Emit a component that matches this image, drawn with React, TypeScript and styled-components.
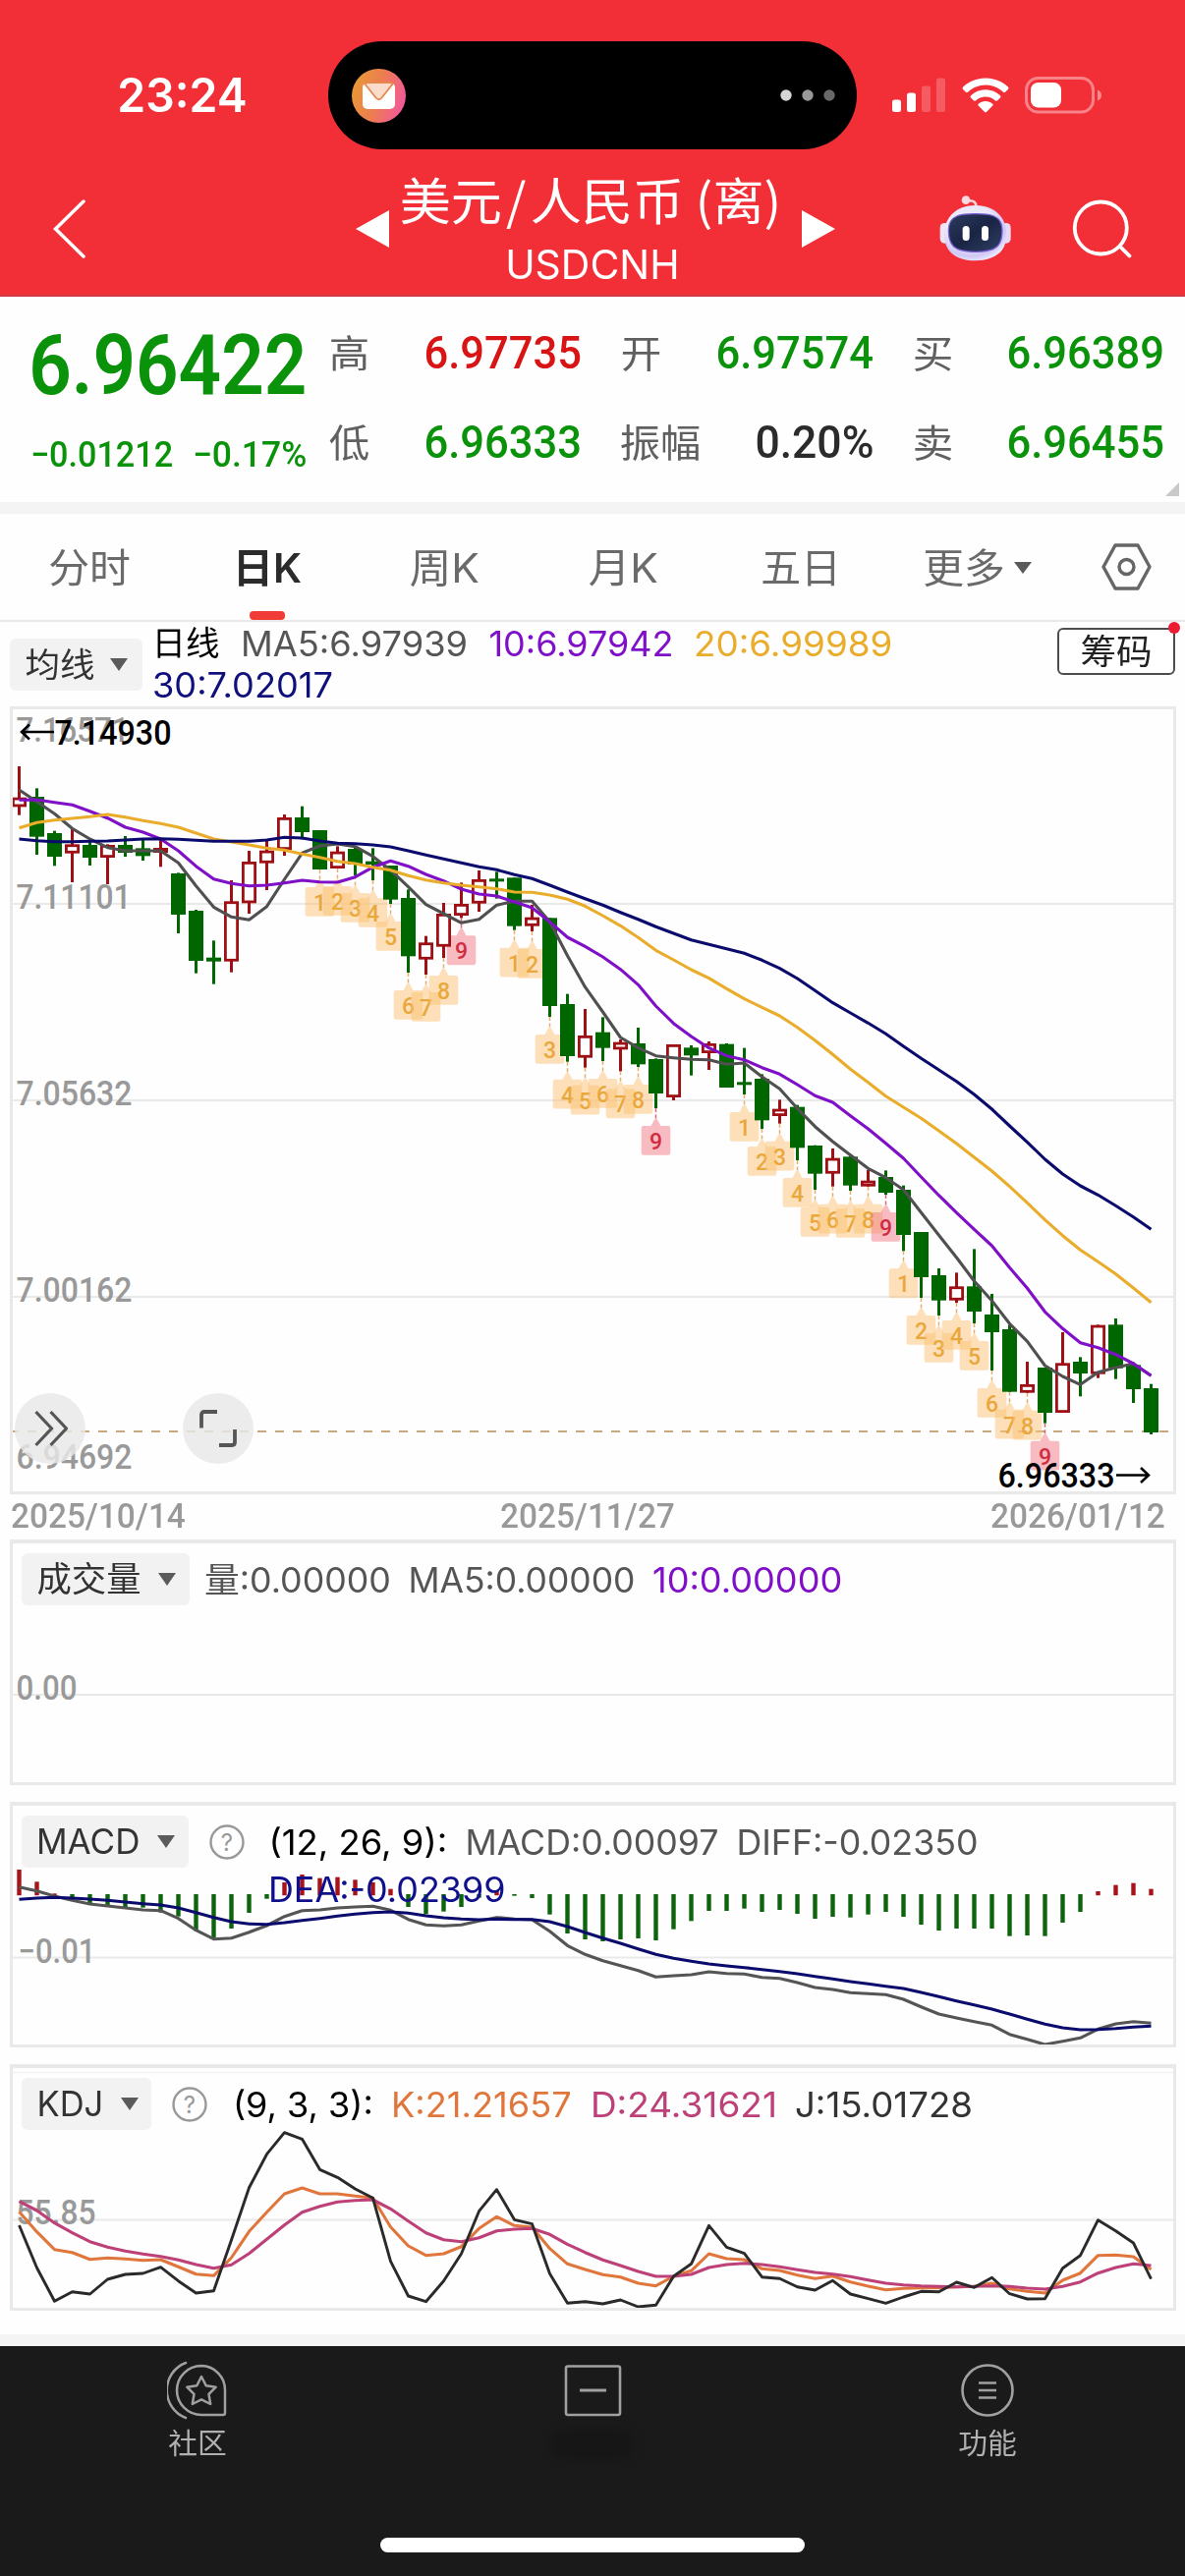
import React, { useLayoutEffect, useRef, useState } from "react";
import styled, { createGlobalStyle } from "styled-components";

const UI = `Inter, "Noto Sans CJK SC", sans-serif`;
const DIN = `Roboto, "Noto Sans CJK SC", sans-serif`;
const HAN = `"Noto Sans CJK SC", Inter, sans-serif`;

const GlobalStyle = createGlobalStyle`
  * { box-sizing: border-box; }
  body { margin: 0; background: #fff; }
  svg { display: block; flex-shrink: 0; }
`;

/* ---------- text that keeps a fixed measure ---------- */

const FitBox = styled.span<{ $w: number; $size: number; $weight: number; $color: string; $font: string; $ml: number; $up: number }>`
  display: flex;
  justify-content: center;
  flex-shrink: 0;
  width: ${(p) => p.$w}px;
  margin-left: ${(p) => p.$ml}px;
  margin-bottom: ${(p) => p.$up}px;
  font-family: ${(p) => p.$font};
  font-size: ${(p) => p.$size}px;
  font-weight: ${(p) => p.$weight};
  color: ${(p) => p.$color};
  line-height: 1;
  white-space: pre;
`;
const FitInner = styled.span`
  flex-shrink: 0;
`;

type FitProps = { w: number; size: number; color: string; children: React.ReactNode; weight?: number; din?: boolean; han?: boolean; ml?: number; up?: number };

function Fit({ w, size, color, children, weight = 400, din, han, ml = 0, up = 0 }: FitProps) {
  const ref = useRef<HTMLSpanElement>(null);
  const [k, setK] = useState(1);
  useLayoutEffect(() => {
    const natural = ref.current ? ref.current.offsetWidth : 0;
    if (natural > 0) setK((w + size * 0.09) / natural);
  }, [w, size]);
  return (
    <FitBox $w={w} $size={size} $weight={weight} $color={color} $font={din ? DIN : han ? HAN : UI} $ml={ml} $up={up}>
      <FitInner ref={ref} style={{ transform: `scaleX(${k})` }}>{children}</FitInner>
    </FitBox>
  );
}

/* ---------- layout parts ---------- */

const Page = styled.div`
  display: flex;
  flex-direction: column;
  width: 1206px;
  height: 2622px;
  overflow: hidden;
  background: #fefefe;
  font-family: ${UI};
  & > * {
    flex-shrink: 0;
  }
`;
const Header = styled.header`
  height: 302px;
  background: #f22f37;
  border-bottom: 2px solid #cf3a44;
`;
const StatusBar = styled.div`
  display: flex;
  align-items: center;
  height: 176px;
  padding: 18px 0 0 121px;
`;
const Island = styled.div`
  display: flex;
  align-items: center;
  justify-content: space-between;
  width: 538px;
  height: 110px;
  margin: 0 36px 0 85px;
  padding: 0 22px 0 24px;
  border-radius: 55px;
  background: #000;
`;
const StatusIcons = styled.div`
  display: flex;
  align-items: center;
  gap: 16px;
`;
const NavBar = styled.div`
  display: flex;
  align-items: center;
  height: 126px;
  padding-left: 52px;
`;
const NavIcon = styled.span<{ $ml?: number; $up?: number }>`
  display: flex;
  margin-left: ${(p) => p.$ml ?? 0}px;
  margin-bottom: ${(p) => p.$up ?? 12}px;
`;
const Title = styled.div`
  display: flex;
  flex-direction: column;
  align-items: center;
  width: 384px;
  margin: 0 22px 0 13px;
`;
const TitleLine = styled.div<{ $h: number }>`
  display: flex;
  align-items: center;
  height: ${(p) => p.$h}px;
`;
const Slash = styled.span`
  margin: 0 4px;
`;

const Quote = styled.section`
  position: relative;
  display: flex;
  height: 209px;
  padding: 12px 0 0 33px;
`;
const PriceCol = styled.div`
  display: flex;
  flex-direction: column;
  flex-shrink: 0;
  width: 278px;
  margin-right: 25px;
  padding-top: 1px;
`;
const PriceLine = styled.div<{ $h: number }>`
  display: flex;
  align-items: center;
  height: ${(p) => p.$h}px;
`;
const QuoteCol = styled.div<{ $w: number }>`
  flex-shrink: 0;
  width: ${(p) => p.$w}px;
  margin-right: 43px;
`;
const QuoteRow = styled.div`
  display: flex;
  align-items: center;
  justify-content: space-between;
  height: 91px;
`;
const Corner = styled.i`
  position: absolute;
  right: 6px;
  bottom: 6px;
  border-left: 14px solid transparent;
  border-bottom: 14px solid #c9c9c9;
`;
const Band = styled.div`
  height: 12px;
  background: #f4f4f4;
`;

const Tabs = styled.nav`
  display: flex;
  height: 110px;
  border-bottom: 2px solid #e8e8e8;
`;
const Tab = styled.div<{ $active?: boolean }>`
  position: relative;
  display: flex;
  align-items: center;
  justify-content: center;
  width: 181px;
  padding-top: 3px;
  &::after {
    content: "";
    display: ${(p) => (p.$active ? "block" : "none")};
    position: absolute;
    left: 73px;
    bottom: 0;
    width: 36px;
    height: 9px;
    border-radius: 4px;
    background: #f03b36;
  }
`;
const MoreTab = styled.div`
  display: flex;
  align-items: center;
  gap: 11px;
  width: 216px;
  padding: 2px 0 0 36px;
`;
const TabIcon = styled.div`
  display: flex;
  align-items: center;
`;

const Triangle = styled.i<{ $w?: number; $h?: number }>`
  border: ${(p) => (p.$w ?? 17) / 2}px solid transparent;
  border-bottom: 0;
  border-top: ${(p) => p.$h ?? 13}px solid #5b5b5b;
`;

const MaBar = styled.div`
  display: flex;
  align-items: flex-start;
  height: 86px;
  padding-left: 10px;
`;
const Picker = styled.button<{ $w: number; $mt?: number; $gap?: number }>`
  display: flex;
  align-items: center;
  gap: ${(p) => p.$gap ?? 19}px;
  flex-shrink: 0;
  width: ${(p) => p.$w}px;
  height: 53px;
  margin: ${(p) => p.$mt ?? 0}px 0 0;
  padding: 0 0 0 17px;
  border: 0;
  border-radius: 6px;
  background: #f2f2f2;
`;
const Legend = styled.div<{ $row: number; $w: number; $mt: number; $ml: number }>`
  display: flex;
  flex-wrap: wrap;
  column-gap: 21px;
  width: ${(p) => p.$w}px;
  margin: ${(p) => p.$mt}px 0 0 ${(p) => p.$ml}px;
  & > span {
    height: ${(p) => p.$row}px;
    line-height: ${(p) => p.$row}px;
  }
`;
const ChipButton = styled.button`
  position: relative;
  display: flex;
  align-items: center;
  justify-content: center;
  width: 120px;
  height: 48px;
  margin: 6px 0 0 20px;
  padding: 0;
  border: 2px solid #4d4d4d;
  border-radius: 6px;
  background: #fff;
  &::after {
    content: "";
    position: absolute;
    top: -8px;
    right: -7px;
    width: 12px;
    height: 12px;
    border-radius: 50%;
    background: #ee1c33;
  }
`;

const Panel = styled.section<{ $h: number; $top?: number; $mb?: number }>`
  position: relative;
  width: 1187px;
  height: ${(p) => p.$h}px;
  margin: 0 0 ${(p) => p.$mb ?? 0}px 10px;
  border: 3px solid #e9e9e9;
  border-top-width: ${(p) => p.$top ?? 4}px;
`;
const ChartLayer = styled.svg`
  position: absolute;
  left: 0;
  top: 0;
  font-family: ${DIN};
`;
const PanelHead = styled.div`
  position: relative;
  display: flex;
  align-items: flex-start;
  padding: 10px 0 0 9px;
`;
const HelpSlot = styled.span`
  display: flex;
  align-items: center;
  height: 53px;
  margin-left: 21px;
`;
const RoundButton = styled.button<{ $left: number }>`
  position: absolute;
  left: ${(p) => p.$left}px;
  top: 696px;
  display: flex;
  align-items: center;
  justify-content: center;
  width: 72px;
  height: 72px;
  padding: 0;
  border: 0;
  border-radius: 50%;
  background: rgba(232, 232, 232, 0.82);
`;
const Dates = styled.div`
  display: flex;
  align-items: center;
  justify-content: space-between;
  height: 46px;
  padding: 0 22px 2px 12px;
`;

const Footer = styled.footer`
  display: flex;
  flex-direction: column;
  align-items: center;
  height: 234px;
  background: #1a1a1a;
`;
const FooterTabs = styled.div`
  display: flex;
  width: 100%;
  height: 195px;
`;
const FooterTab = styled.div`
  display: flex;
  flex: 1;
  flex-direction: column;
  align-items: center;
  gap: 9px;
  padding-top: 14px;
`;
const Smudge = styled.i`
  width: 84px;
  height: 30px;
  border-radius: 14px;
  background: #161616;
  filter: blur(5px);
`;
const HomeBar = styled.div`
  width: 432px;
  height: 15px;
  border-radius: 8px;
  background: #fff;
`;

/* ---------- icons ---------- */

const MailIcon = () => (
  <svg width="55" height="55" viewBox="0 0 55 55">
    <defs>
      <linearGradient id="mail" x1="0" y1="0.3" x2="1" y2="0.6">
        <stop offset="0" stopColor="#e79a34" />
        <stop offset="0.5" stopColor="#ee7c52" />
        <stop offset="1" stopColor="#f2589a" />
      </linearGradient>
    </defs>
    <circle cx="27.5" cy="27.5" r="27.5" fill="url(#mail)" />
    <rect x="11" y="14" width="33" height="27" rx="5" fill="#fff" />
    <path d="M13 15 L24.5 29.5 Q27.5 33 30.5 29.5 L42 15 Q40 14 38 14 L17 14 Q15 14 13 15Z" fill="#fbdccb" stroke="#e8864f" strokeWidth="1.8" />
  </svg>
);
const DotsIcon = () => (
  <svg width="57" height="12" viewBox="0 0 57 12">
    <circle cx="7" cy="6" r="5.7" fill="#d6d6d6" />
    <circle cx="29" cy="6" r="5.7" fill="#989898" />
    <circle cx="51" cy="6" r="5.7" fill="#686868" />
  </svg>
);
const SignalIcon = () => (
  <svg width="55" height="36" viewBox="0 0 55 36" fill="#fff">
    <rect x="0" y="22.5" width="9" height="12.5" rx="2.5" />
    <rect x="15" y="15.5" width="9" height="19.5" rx="2.5" />
    <rect x="30" y="8.5" width="9" height="26.5" rx="2.5" opacity="0.22" />
    <rect x="45" y="0.5" width="9" height="34.5" rx="2.5" opacity="0.22" />
  </svg>
);
const WifiIcon = () => (
  <svg width="48" height="36" viewBox="0 0 48 36" fill="#fff">
    <path d="M24 0.5C33 .5 41 4 46.9 9.6c.7.7.7 1.6 0 2.300l-2.600 2.700c-.6.700-1.600.700-2.300.1C37.300 10.400 31 7.500 24 7.500S10.700 10.400 6 14.700c-.7.600-1.700.600-2.300-.1L1.100 11.900c-.7-.7-.7-1.600 0-2.300C7 4 15 .5 24 .5Z" />
    <path d="M24 12.300c5.800 0 11 2.200 14.900 5.900.7.700.7 1.600.1 2.300l-2.800 2.800c-.6.600-1.500.600-2.200.1C31.300 20.900 27.800 19.400 24 19.400s-7.300 1.500-10 4c-.7.500-1.600.500-2.200-.1L9 20.500c-.6-.7-.6-1.600.1-2.300C13 14.500 18.200 12.300 24 12.300Z" />
    <path d="M24 24c2.700 0 5.100.9 7 2.500.8.700.8 1.500.1 2.200l-5.900 6c-.7.700-1.700.700-2.400 0l-5.900-6c-.7-.7-.7-1.500.1-2.200 1.900-1.600 4.300-2.500 7-2.500Z" />
  </svg>
);
const BatteryIcon = () => (
  <svg width="79" height="38" viewBox="0 0 79 38">
    <rect x="1.500" y="1.500" width="68" height="34.500" rx="12" fill="none" stroke="#fff" strokeOpacity="0.4" strokeWidth="3" />
    <rect x="6" y="6" width="31" height="25.500" rx="7.500" fill="#fff" />
    <path d="M74 13.500 Q78 15 78 19 T74 24.500Z" fill="#fff" opacity="0.45" />
  </svg>
);
const BackIcon = () => (
  <svg width="38" height="64" viewBox="0 0 38 64" fill="none" stroke="#fff" strokeWidth="3.500" strokeLinecap="round">
    <path d="M33 4 L4.500 32 L33 60" />
  </svg>
);
const ArrowHead = ({ flip }: { flip?: boolean }) => (
  <svg width="34" height="38" viewBox="0 0 34 38" fill="#fff">
    <path d={flip ? "M0 0 L34 19 L0 38Z" : "M34 0 L0 19 L34 38Z"} />
  </svg>
);
const RobotIcon = () => (
  <svg width="76" height="72" viewBox="196 410 228 216">
    <defs>
      <radialGradient id="head" cx="0.42" cy="0.36" r="0.68">
        <stop offset="0.55" stopColor="#eceafa" />
        <stop offset="0.82" stopColor="#cfc8f6" />
        <stop offset="1" stopColor="#f0ecfc" />
      </radialGradient>
      <linearGradient id="visor" x1="0" y1="0" x2="1" y2="1">
        <stop offset="0" stopColor="#2c3a5c" />
        <stop offset="0.5" stopColor="#1a2545" />
        <stop offset="1" stopColor="#2e4064" />
      </linearGradient>
    </defs>
    <path d="M288 432 Q312 430 311 450" fill="none" stroke="#fbd5dc" strokeWidth="8" />
    <circle cx="280" cy="430" r="13" fill="#fbd9e0" />
    <rect x="201" y="500" width="28" height="62" rx="14" fill="#f0e4f6" />
    <rect x="389" y="500" width="28" height="62" rx="14" fill="#ead9f6" />
    <path d="M309 446 C365 446 404 480 404 535 C404 590 365 615 309 615 C253 615 214 590 214 535 C214 480 253 446 309 446Z" fill="url(#head)" />
    <path d="M309 472 C350 472 391 474 391 522 C391 565 378 588 309 588 C240 588 227 565 227 522 C227 474 268 472 309 472Z" fill="url(#visor)" stroke="#7a5fd6" strokeWidth="4" />
    <rect x="270" y="509" width="21" height="45" rx="10.500" fill="#fff" />
    <rect x="328" y="509" width="21" height="45" rx="10.500" fill="#fff" />
  </svg>
);
const SearchIcon = () => (
  <svg width="64" height="62" viewBox="0 0 64 62" fill="none" stroke="#fff" strokeWidth="3.800" strokeLinecap="round">
    <circle cx="30.300" cy="30" r="26.500" />
    <path d="M50 49 L59.500 58.500" />
  </svg>
);
const HexIcon = () => (
  <svg width="52" height="48" viewBox="0 0 52 48" fill="none" stroke="#666" strokeWidth="3.400" strokeLinejoin="round">
    <path d="M14 2 L37 2 L49 24 L37 46 L14 46 L2 24Z" />
    <circle cx="25.500" cy="24" r="7.500" />
  </svg>
);
const HelpIcon = () => (
  <svg width="36" height="36" viewBox="0 0 36 36">
    <circle cx="18" cy="18" r="16.500" fill="none" stroke="#999" strokeWidth="2.400" />
    <text x="18" y="26.500" textAnchor="middle" fontFamily="Inter" fontSize="24" fill="#999">?</text>
  </svg>
);
const ForwardIcon = () => (
  <svg width="36" height="38" viewBox="-1.500 0 36 38" fill="none" stroke="#555" strokeWidth="3.200">
    <path d="M2 2 L18 19 L2 36 M17 2 L33 19 L17 36" />
  </svg>
);
const ExpandIcon = () => (
  <svg width="38" height="38" viewBox="0 0 38 38" fill="none" stroke="#555" strokeWidth="3.800">
    <path d="M2 18.500 V5 Q2 2 5 2 H18 M36 20 V33 Q36 36 33 36 H20" />
  </svg>
);
const CommunityIcon = () => (
  <svg width="62" height="62" viewBox="0 0 62 62" fill="none" stroke="#a0a0a0" strokeWidth="2.500" strokeLinecap="round" strokeLinejoin="round">
    <path d="M19 3 A30 30 0 0 0 19 59" />
    <path d="M35 6 A24.500 24.500 0 0 0 35 56 H57 Q59 56 59 54 V31 A24.500 24.500 0 0 0 35 6Z" />
    <path d="M35 17 L39.700 26.200 L49.700 27.700 L42.500 34.900 L44.200 45 L35 40.300 L25.800 45 L27.500 34.900 L20.300 27.700 L30.300 26.200Z" />
  </svg>
);
const TradeIcon = () => (
  <svg width="62" height="62" viewBox="0 0 62 62" fill="none" stroke="#a0a0a0" strokeWidth="2.600">
    <rect x="4" y="6.500" width="55" height="49.500" rx="2" />
    <path d="M18 31 H45" strokeWidth="3" />
  </svg>
);
const MenuIcon = () => (
  <svg width="62" height="62" viewBox="0 0 62 62" fill="none" stroke="#a0a0a0" strokeWidth="2.600">
    <circle cx="31" cy="31" r="25.500" />
    <path d="M22 23.500 H40 M22 31 H40 M22 38.500 H40" />
  </svg>
);

/* ---------- chart data: one entry per trading day ---------- */

const STEP = 18;
const X0 = 19.5;
const dayX = (i: number) => X0 + i * STEP;

type Segment = { base: number; rows: string };
const third = (base: number, v: number) => base + v / 3;

const CANDLES: Segment[] = [
  {
    base: 720,
    rows:
      "r180,275,304,329 g247,273,395,450 g377,384,456,484 r370,418,446,534 g405,420,459,483 r418,420,459,540 g393,420,444,456 g405,430,454,468 r405,429,444,487 g505,507,633,690 g618,621,774,812 g712,764,776,845 r528,592,776,809 r438,471,598,630 r408,437,476,558 r327,336,435,453 g302,336,381,403 g375,375,495,495 r424,440,492,492 g429,432,480,513 g430,470,480,528 g483,483,587,600",
  },
  {
    base: 800,
    rows:
      "g316,342,520,570 r458,478,530,576 r357,390,491,525 r295,360,396,403 r258,285,359,384 g262,283,292,344 g280,280,428,440 r363,401,428,444 g403,403,672,705 g635,666,825,842 r681,762,830,860 g706,752,800,840 r774,782,805,871 g738,786,850,858 g832,834,939,984 r789,789,951,960 g792,799,823,884 r780,786,816,867 g786,788,921,921 g800,904,913,942 g880,894,1021,1047 r958,986,1008,1031 g974,980,1105,1143",
  },
  {
    base: 1020,
    rows:
      "g437,438,524,573 r447,476,524,563 g470,472,560,576 r513,545,563,563 g514,534,582,588 g560,573,711,760 g702,702,840,903 g813,834,911,957 r826,868,911,918 g754,868,945,981 g891,954,1008,1125 g985,999,1190,1190 r1098,1167,1193,1193 g1116,1116,1254,1286 r1008,1102,1254,1254 g1084,1098,1134,1204 r985,986,1136,1148 g966,985,1118,1151 g1100,1108,1182,1224 g1166,1179,1314,1320",
  },
];
const candles = CANDLES.flatMap((s) =>
  s.rows.split(" ").map((r) => ({
    up: r[0] === "r",
    v: r.slice(1).split(",").map((n) => third(s.base, Number(n))),
  }))
);

const series = (...parts: [number, number[]][]) => parts.flatMap(([base, vs]) => vs.map((v) => third(base, v)));
const toPoints = (ys: number[]) => ys.map((y, i) => `${dayX(i)},${y.toFixed(1)}`).join(" ");

const MA5 = series(
  [720, [252, 288, 325, 370, 402, 428, 438, 438, 438, 475, 545, 610, 640, 649, 608, 525, 445, 423, 417, 425, 455, 497]],
  [800, [308, 362, 390, 418, 407, 364, 352, 352, 415, 518, 614, 690, 768, 800, 824, 830, 835, 836, 850, 846, 888, 925, 985]],
  [1020, [380, 426, 467, 508, 536, 573, 643, 712, 780, 852, 912, 982, 1036, 1110, 1143, 1168, 1130, 1116, 1104, 1141]]
);
const MA10 = series(
  [720, [283, 282, 290, 298, 317, 338, 366, 381, 402, 438, 485, 524, 538, 545, 543, 536, 528, 533, 534, 518, 488, 469]],
  [800, [245, 270, 290, 315, 330, 336, 354, 372, 415, 462, 490, 522, 560, 607, 672, 725, 765, 800, 824, 836, 860, 880, 912]],
  [1020, [286, 306, 347, 387, 431, 477, 534, 590, 643, 694, 744, 811, 874, 946, 997, 1040, 1055, 1076, 1104, 1141]]
);
const MA20 = series(
  [720, [368, 352, 344, 339, 334, 327, 335, 346, 355, 366, 384, 402, 411, 420, 430, 436, 448, 458, 470, 477, 488, 497]],
  [800, [274, 287, 296, 303, 308, 314, 324, 325, 333, 346, 367, 396, 427, 463, 502, 531, 561, 587, 619, 650, 676, 702, 737]],
  [1020, [117, 160, 205, 245, 287, 321, 355, 393, 432, 474, 516, 563, 613, 665, 713, 757, 793, 830, 873, 917]]
);
const MA30 = series(
  [720, [402, 407, 410, 410, 409, 408, 405, 402, 401, 403, 406, 409, 409, 409, 405, 397, 399, 408, 415, 416, 420, 426]],
  [800, [198, 211, 223, 235, 247, 256, 271, 283, 303, 324, 344, 364, 386, 407, 430, 450, 470, 484, 497, 511, 532, 557, 588]],
  [1020, [-35, 2, 33, 64, 97, 135, 172, 207, 242, 282, 327, 378, 428, 480, 525, 561, 589, 622, 656, 694]]
);

const COUNTS: [number, number][] = [[17, 9], [28, 9], [41, 9], [50, 9]];
const markers = COUNTS.flatMap(([start, n]) =>
  Array.from({ length: n }, (_, k) => ({ n: k + 1, x: dayX(start + k), low: candles[start + k].v[3] }))
);

const BARS = [
  249, 286, 322, 335, 355, 360, 365, 365, 380, 392, 436, 458, 429, 381, 338, 288, 264, 275, 272, 280, 288, 308, 363, 385, 377,
  363, 335, 314, 329, 336, 386, 444, 462, 468, 462, 459, 465, 431, 406, 375, 375, 368, 378, 372, 384, 399, 393, 395, 386, 378,
  393, 417, 435, 429, 429, 429, 452, 450, 452, 411, 378, 315, 296, 290, 308,
];
const DIFF = series([1820, [
  302, 314, 330, 343, 354, 360, 366, 372, 374, 398, 434, 461, 458, 440, 420, 392, 374, 372, 366, 363, 361, 373, 401, 418, 421,
  418, 406, 395, 400, 402, 437, 481, 508, 527, 542, 557, 577, 573, 570, 561, 566, 568, 578, 581, 594, 609, 615, 625, 628, 631,
  645, 668, 690, 702, 713, 724, 752, 767, 783, 773, 763, 736, 720, 713, 718,
]]);
const DEA = series([1820, [
  340, 336, 334, 336, 339, 343, 348, 353, 357, 366, 380, 395, 408, 415, 416, 411, 404, 398, 391, 385, 380, 378, 382, 390, 396,
  400, 402, 400, 401, 401, 408, 423, 441, 458, 474, 491, 508, 520, 529, 537, 543, 548, 554, 560, 567, 575, 583, 591, 598, 605,
  612, 624, 637, 650, 662, 675, 690, 706, 721, 732, 738, 737, 734, 730, 727,
]]);
const KJ_J = series([2090, [
  525, 655, 757, 728, 735, 690, 675, 672, 653, 695, 732, 725, 570, 410, 308, 242, 262, 355, 379, 414, 442, 635, 741, 758, 695,
  612, 482, 416, 508, 521, 673, 763, 758, 765, 753, 774, 769, 681, 643, 526, 592, 611, 683, 688, 713, 723, 694, 735, 749, 763,
  744, 727, 728, 699, 715, 685, 734, 750, 749, 656, 617, 509, 542, 579, 689,
]]);
const KJ_K = series([2090, [
  484, 545, 599, 608, 629, 625, 628, 632, 630, 652, 674, 679, 624, 544, 485, 429, 411, 429, 429, 436, 442, 530, 588, 617, 612,
  590, 535, 499, 526, 531, 596, 643, 660, 676, 683, 702, 710, 681, 664, 612, 627, 630, 658, 663, 677, 688, 680, 698, 711, 722,
  718, 716, 716, 713, 712, 702, 719, 727, 732, 693, 671, 617, 616, 621, 660,
]]);
const KJ_D = series([2090, [
  452, 480, 518, 548, 575, 592, 604, 613, 620, 631, 645, 656, 646, 611, 568, 524, 485, 467, 454, 449, 447, 475, 512, 548, 569,
  575, 563, 542, 537, 535, 553, 583, 608, 631, 648, 666, 681, 681, 675, 654, 645, 641, 645, 652, 661, 669, 674, 682, 692, 702,
  707, 710, 712, 713, 712, 710, 712, 717, 720, 712, 698, 671, 654, 643, 648,
]]);

/* ---------- chart pieces ---------- */

const Line = ({ ys, color, w = 3.1 }: { ys: number[]; color: string; w?: number }) => (
  <polyline points={toPoints(ys)} fill="none" stroke={color} strokeWidth={w} strokeLinejoin="round" />
);
const AxisLabel = ({ x, y, w, color = "#999", children }: { x: number; y: number; w: number; color?: string; children: string }) => (
  <text x={x - 1.5} y={y} fontSize="34.500" fontWeight="500" fill={color} textLength={w + 3} lengthAdjust="spacingAndGlyphs">{children}</text>
);
const GridLine = ({ y }: { y: number }) => <path d={`M13 ${y} H1194`} stroke="#e9e9e9" strokeWidth="2" />;

const Candle = ({ i }: { i: number }) => {
  const { up, v } = candles[i];
  const [hi, top, bot, lo] = v;
  const x = dayX(i);
  if (!up)
    return (
      <g fill="#006600">
        <rect x={x - 1.5} y={hi} width="3" height={lo - hi} />
        <rect x={x - 7.5} y={top} width="15" height={bot - top} />
      </g>
    );
  return (
    <g>
      <rect x={x - 1.5} y={hi} width="3" height={lo - hi} fill="#9e1014" />
      <rect x={x - 6.1} y={top + 1.4} width="12.200" height={Math.max(bot - top - 2.8, 1)} fill="#fff" stroke="#9e1014" strokeWidth="2.800" />
    </g>
  );
};

const Marker = ({ n, x, low }: { n: number; x: number; low: number }) => {
  const last = n === 9;
  const t = low + 18;
  return (
    <g>
      <path d={`M${x} ${low} V${low + 11}`} stroke={last ? "#d96a74" : "#e3b070"} strokeWidth="1.500" strokeDasharray="4 2.500" />
      <path
        d={`M${x - 5} ${t} L${x - 1.5} ${t - 6.5} Q${x} ${t - 8} ${x + 1.5} ${t - 6.5} L${x + 5} ${t} H${x + 12.500} Q${x + 14.800} ${t} ${x + 14.800} ${t + 2.300} V${t + 27.500} Q${x + 14.800} ${t + 29.800} ${x + 12.500} ${t + 29.800} H${x - 12.500} Q${x - 14.800} ${t + 29.800} ${x - 14.800} ${t + 27.500} V${t + 2.300} Q${x - 14.800} ${t} ${x - 12.500} ${t}Z`}
        fill={last ? "#f06a78" : "#fbc274"}
        opacity={last ? 0.45 : 0.5}
      />
      <text x={x} y={t + 24} textAnchor="middle" fontSize="23" fontWeight="500" fill={last ? "#d02c42" : "#eaa73c"}>{n}</text>
    </g>
  );
};

function KLineChart() {
  return (
    <ChartLayer width="1181" height="796" viewBox="13 722 1181 796">
      {[920, 1120, 1320].map((y) => <GridLine key={y} y={y} />)}
      <AxisLabel x={18} y={754.500} w={112}>7.16571</AxisLabel>
      <AxisLabel x={18} y={924.500} w={114}>7.11101</AxisLabel>
      <AxisLabel x={18} y={1124.500} w={115}>7.05632</AxisLabel>
      <AxisLabel x={18} y={1324.500} w={115}>7.00162</AxisLabel>
      <AxisLabel x={18} y={1494.500} w={115}>6.94692</AxisLabel>
      <path d="M10 1457 H1190" stroke="#c8a97c" strokeWidth="2" strokeDasharray="9 9" />
      {markers.map((m) => <Marker key={m.x} {...m} />)}
      {candles.map((_, i) => <Candle key={i} i={i} />)}
      <Line ys={MA5} color="#505050" />
      <Line ys={MA10} color="#7f10c8" />
      <Line ys={MA20} color="#e9ad2b" />
      <Line ys={MA30} color="#0b0b6e" />
      <g fill="none" stroke="#000" strokeWidth="2.500">
        <path d="M55 745 H22 M30 737.500 L22 745 L30 752.500" />
        <path d="M1136 1501.500 H1169 M1161 1494 L1169 1501.500 L1161 1509" />
      </g>
      <AxisLabel x={57} y={758} w={116} color="#000">7.14930</AxisLabel>
      <AxisLabel x={1017} y={1513.500} w={116} color="#000">6.96333</AxisLabel>
    </ChartLayer>
  );
}

function MacdChart() {
  return (
    <ChartLayer width="1181" height="243" viewBox="13 1838 1181 243">
      <GridLine y={1992.500} />
      <AxisLabel x={20} y={1997.500} w={76}>−0.01</AxisLabel>
      {BARS.map((b, i) => {
        const red = b < 325;
        const end = third(1820, b);
        return (
          <rect key={i} x={dayX(i) - 2.2} y={red ? end : 1928} width="4.400" height={red ? 1929.200 - end : end - 1928} fill={red ? "#a81218" : "#0c640c"} />
        );
      })}
      <Line ys={DIFF} color="#555" />
      <Line ys={DEA} color="#0b0b6e" />
    </ChartLayer>
  );
}

function KdjChart() {
  return (
    <ChartLayer width="1181" height="244" viewBox="13 2105 1181 244">
      <path d="M13 2109.500 H1194" stroke="#f3f3f3" strokeWidth="1.500" />
      <GridLine y={2259.500} />
      <AxisLabel x={18} y={2263.500} w={78}>55.85</AxisLabel>
      <Line ys={KJ_K} color="#e0763c" />
      <Line ys={KJ_D} color="#bd4178" />
      <Line ys={KJ_J} color="#2a2a2a" w={2.9} />
    </ChartLayer>
  );
}

const RED = "#d81414";
const GREEN = "#0b920b";
const QUOTES = [
  { w: 254, rows: [["高", 38, "6.97735", 156, RED], ["低", 38, "6.96333", 156, GREEN]] },
  { w: 254, rows: [["开", 38, "6.97574", 156, GREEN], ["振幅", 79, "0.20%", 117, "#2b2b2b"]] },
  { w: 253, rows: [["买", 38, "6.96389", 156, GREEN], ["卖", 38, "6.96455", 156, GREEN]] },
] as { w: number; rows: [string, number, string, number, string][] }[];

export default function App() {
  return (
    <Page>
      <GlobalStyle />
      <Header>
        <StatusBar>
          <Fit w={128} size={48} weight={600} color="#fff">23:24</Fit>
          <Island>
            <MailIcon />
            <DotsIcon />
          </Island>
          <StatusIcons>
            <SignalIcon />
            <WifiIcon />
            <BatteryIcon />
          </StatusIcons>
        </StatusBar>
        <NavBar>
          <NavIcon><BackIcon /></NavIcon>
          <NavIcon $ml={272}><ArrowHead /></NavIcon>
          <Title>
            <TitleLine $h={60}>
              <Fit han w={384} size={51} color="#fff" up={12}>美元<Slash>/</Slash>人民币 (离)</Fit>
            </TitleLine>
            <TitleLine $h={62}>
              <Fit w={174} ml={4} size={41} color="#fff">USDCNH</Fit>
            </TitleLine>
          </Title>
          <NavIcon $ml={1}><ArrowHead flip /></NavIcon>
          <NavIcon $ml={105}><RobotIcon /></NavIcon>
          <NavIcon $ml={59}><SearchIcon /></NavIcon>
        </NavBar>
      </Header>

      <Quote>
        <PriceCol>
          <PriceLine $h={114}>
            <Fit din w={276} size={85} weight={600} color={GREEN}>6.96422</Fit>
          </PriceLine>
          <PriceLine $h={68}>
            <Fit din w={142} size={36} weight={500} color={GREEN}>−0.01212</Fit>
            <Fit din w={113} ml={23} size={36} weight={500} color={GREEN}>−0.17%</Fit>
          </PriceLine>
        </PriceCol>
        {QUOTES.map((col, i) => (
          <QuoteCol key={i} $w={col.w}>
            {col.rows.map(([label, lw, value, vw, color]) => (
              <QuoteRow key={label}>
                <Fit w={lw} size={39} color="#606060">{label}</Fit>
                <Fit din w={vw} size={47} weight={500} color={color} up={3}>{value}</Fit>
              </QuoteRow>
            ))}
          </QuoteCol>
        ))}
        <Corner />
      </Quote>
      <Band />

      <Tabs>
        <Tab><Fit w={80} size={41} color="#6a6a6a">分时</Fit></Tab>
        <Tab $active><Fit w={67} size={41} weight={600} color="#2b2b2b">日K</Fit></Tab>
        <Tab><Fit w={68} size={41} color="#6a6a6a">周K</Fit></Tab>
        <Tab><Fit w={68} ml={2} size={41} color="#6a6a6a">月K</Fit></Tab>
        <Tab><Fit w={78} size={41} color="#6a6a6a">五日</Fit></Tab>
        <MoreTab>
          <Fit w={80} size={41} color="#6a6a6a">更多</Fit>
          <Triangle $w={18} $h={12} />
        </MoreTab>
        <TabIcon><HexIcon /></TabIcon>
      </Tabs>

      <MaBar>
        <Picker $w={135} $mt={17} $gap={17}>
          <Fit w={68} size={34} color="#333">均线</Fit>
          <Triangle $w={18} />
        </Picker>
        <Legend $row={42} $w={900} $mt={1} $ml={11}>
          <Fit w={66} size={34} color="#000">日线</Fit>
          <Fit w={228} ml={4} size={35} color="#555">MA5:6.97939</Fit>
          <Fit w={185} ml={3} size={35} color="#7f10c8">10:6.97942</Fit>
          <Fit w={199} ml={3} size={35} color="#e9ad2b">20:6.99989</Fit>
          <Fit w={181} size={35} color="#10107c">30:7.02017</Fit>
        </Legend>
        <ChipButton>
          <Fit w={70} size={35} color="#222">筹码</Fit>
        </ChipButton>
      </MaBar>

      <Panel $h={802} $top={3}>
        <KLineChart />
        <RoundButton $left={2}><ForwardIcon /></RoundButton>
        <RoundButton $left={173}><ExpandIcon /></RoundButton>
      </Panel>
      <Dates>
        <Fit din w={175} size={34.5} weight={500} color="#999">2025/10/14</Fit>
        <Fit din w={175} size={34.5} weight={500} color="#999">2025/11/27</Fit>
        <Fit din w={175} size={34.5} weight={500} color="#999">2026/01/12</Fit>
      </Dates>

      <Panel $h={250} $mb={17}>
        <ChartLayer width="1181" height="243" viewBox="13 1571 1181 243">
          <path d="M13 1725 H1194" stroke="#e9e9e9" strokeWidth="2" />
          <AxisLabel x={18} y={1730} w={59}>0.00</AxisLabel>
        </ChartLayer>
        <PanelHead>
          <Picker $w={171}>
            <Fit w={103} size={35} color="#333">成交量</Fit>
            <Triangle $w={18} />
          </Picker>
          <Legend $row={48} $w={900} $mt={3} $ml={16}>
            <Fit w={187} size={35} color="#555">量:0.00000</Fit>
            <Fit w={228} size={35} color="#555">MA5:0.00000</Fit>
            <Fit w={190} size={35} color="#7f10c8">10:0.00000</Fit>
          </Legend>
        </PanelHead>
      </Panel>

      <Panel $h={250} $mb={17}>
        <MacdChart />
        <PanelHead>
          <Picker $w={170}>
            <Fit w={102} size={35} color="#333">MACD</Fit>
            <Triangle $w={18} />
          </Picker>
          <HelpSlot><HelpIcon /></HelpSlot>
          <Legend $row={48} $w={860} $mt={3} $ml={26}>
            <Fit w={179} size={35} color="#000">(12, 26, 9):</Fit>
            <Fit w={255} size={35} color="#555">MACD:0.00097</Fit>
            <Fit w={243} size={35} color="#555">DIFF:-0.02350</Fit>
            <Fit w={238} size={35} color="#10108c">DEA:-0.02399</Fit>
          </Legend>
        </PanelHead>
      </Panel>

      <Panel $h={251} $mb={24}>
        <KdjChart />
        <PanelHead>
          <Picker $w={132}>
            <Fit w={65} size={35} color="#333">KDJ</Fit>
            <Triangle $w={18} />
          </Picker>
          <HelpSlot><HelpIcon /></HelpSlot>
          <Legend $row={48} $w={860} $mt={3} $ml={27}>
            <Fit w={140} size={35} color="#000">(9, 3, 3):</Fit>
            <Fit w={181} size={35} color="#e0763c">K:21.21657</Fit>
            <Fit w={187} ml={1} size={35} color="#bd4178">D:24.31621</Fit>
            <Fit w={178} size={35} color="#333">J:15.01728</Fit>
          </Legend>
        </PanelHead>
      </Panel>
      <Band />

      <Footer>
        <FooterTabs>
          <FooterTab>
            <CommunityIcon />
            <Fit w={57} size={29} color="#b0b0b0">社区</Fit>
          </FooterTab>
          <FooterTab>
            <TradeIcon />
            <Smudge />
          </FooterTab>
          <FooterTab>
            <MenuIcon />
            <Fit w={57} size={29} color="#b0b0b0">功能</Fit>
          </FooterTab>
        </FooterTabs>
        <HomeBar />
      </Footer>
    </Page>
  );
}
